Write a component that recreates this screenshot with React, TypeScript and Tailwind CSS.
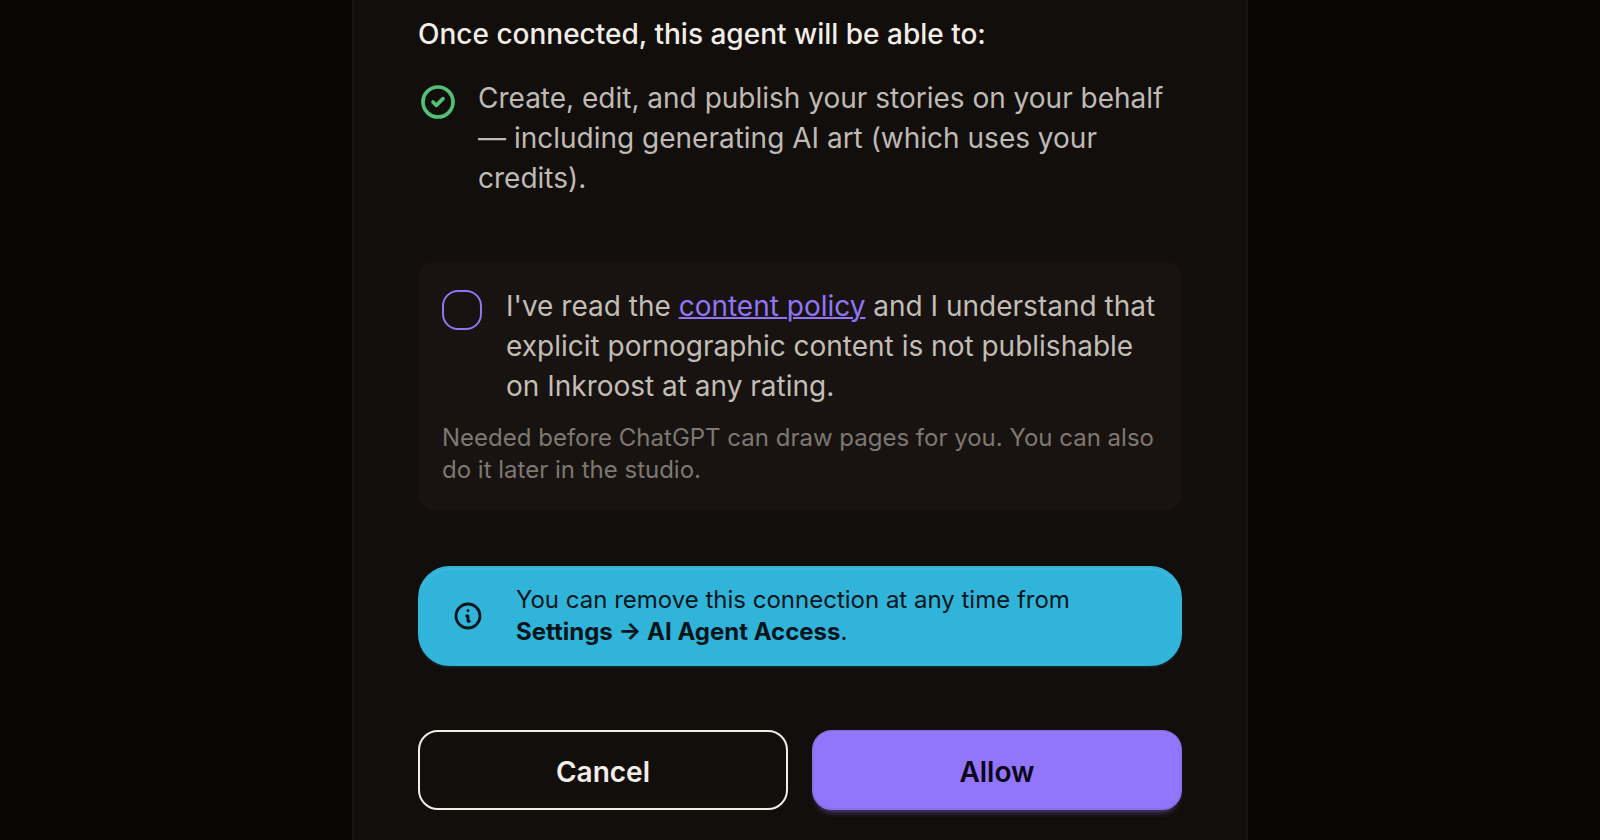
import React from 'react';

const CheckCircleIcon: React.FC = () => (
  <svg className="w-10 h-10 mt-1 shrink-0 text-[#52c177]" fill="none" viewBox="0 0 24 24" stroke="currentColor">
    <path
      strokeLinecap="round"
      strokeLinejoin="round"
      strokeWidth={2.2}
      d="M9 12l2 2 4-4m6 2a9 9 0 11-18 0 9 9 0 0118 0z"
    />
  </svg>
);

const InfoIcon: React.FC = () => (
  <svg className="w-8 h-8 shrink-0" fill="none" viewBox="0 0 24 24" stroke="currentColor">
    <path
      strokeLinecap="round"
      strokeLinejoin="round"
      strokeWidth={2.1}
      d="M13 16h-1v-4h-1m1-4h.01M21 12a9 9 0 11-18 0 9 9 0 0118 0z"
    />
  </svg>
);

const permissions: string[] = [
  'Create, edit, and publish your stories on your behalf — including generating AI art (which uses your credits).'
];

const App: React.FC = () => {
  return (
    <div className="h-[840px] overflow-hidden bg-[#070604] flex justify-center font-['Inter',sans-serif]">
      <div className="w-[896px] h-full border-x-2 border-[#171411] bg-[#120e0b] px-16 pt-3.5">
        <h2 className="text-[28px] leading-10 font-medium text-[#f2ede7]">
          Once connected, this agent will be able to:
        </h2>

        <ul className="mt-6">
          {permissions.map((permission) => (
            <li key={permission} className="flex items-start gap-5">
              <CheckCircleIcon />
              <span className="text-[28px] leading-10 text-[#bfbab5]">{permission}</span>
            </li>
          ))}
        </ul>

        <div className="mt-16 rounded-2xl bg-[#181310] p-6">
          <label className="flex items-start gap-6">
            <input
              type="checkbox"
              className="appearance-none w-10 h-10 mt-1 shrink-0 rounded-2xl border-2 border-[#8f75f0]"
            />
            <span className="text-[28px] leading-10 text-[#c2bdb7]">
              I've read the{' '}
              <a href="#" className="text-[#9075f5] underline decoration-2">content policy</a>{' '}
              and I understand that explicit pornographic content is not publishable on Inkroost at any rating.
            </span>
          </label>
          <p className="mt-4 text-2xl leading-8 text-[#7d7873]">
            Needed before ChatGPT can draw pages for you. You can also do it later in the studio.
          </p>
        </div>

        <div className="mt-14 h-[100px] flex items-center gap-8 rounded-4xl border-2 border-[#30b4da] bg-[#30b4da] px-8 text-[#03141a] shadow-[inset_0_2px_1px_rgba(255,255,255,0.08),0_2px_1px_rgba(48,180,218,0.12)]">
          <InfoIcon />
          <p className="text-2xl leading-8">
            You can remove this connection at any time from <strong className="font-bold">Settings → AI Agent Access</strong>.
          </p>
        </div>

        <div className="mt-16 grid grid-cols-2 gap-6 text-[28px] font-semibold">
          <button className="h-20 pt-1 rounded-[20px] border-2 border-[#f2ede7] text-[#f2ede7]">Cancel</button>
          <button className="h-20 pt-1 rounded-[20px] border-2 border-[#8a6fea] bg-[#9275fb] text-[#0b0618] shadow-[inset_0_1px_1px_rgba(255,255,255,0.1),0_6px_6px_-4px_rgba(146,117,251,0.5)]">
            Allow
          </button>
        </div>
      </div>
    </div>
  );
};

export default App;
